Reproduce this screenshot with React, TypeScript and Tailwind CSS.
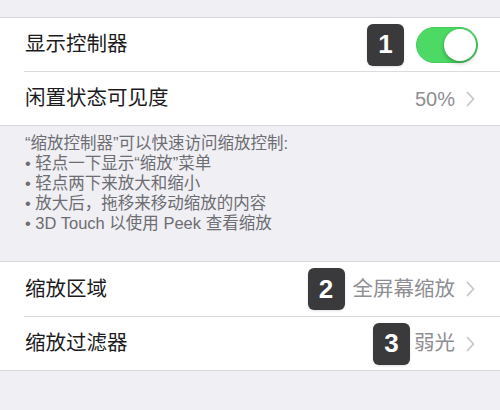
import React from "react";

const font = { fontFamily: '"Liberation Sans", "Noto Sans CJK SC", sans-serif' };

const Badge: React.FC<{ n: string; className?: string }> = ({ n, className }) => (
  <div
    className={`w-[37px] h-[42px] rounded-[6px] bg-[#3a393b] text-white text-[26px] font-bold flex items-center justify-center shadow ${className ?? ""}`}
  >
    {n}
  </div>
);

const Chevron = () => (
  <svg width="9" height="16" viewBox="0 0 9 16" className="ml-[11px]">
    <path d="M1.5 1.5 L7.5 8 L1.5 14.5" fill="none" stroke="#c7c7cc" strokeWidth="1.8" strokeLinecap="round" strokeLinejoin="round" />
  </svg>
);

const Toggle = () => (
  <div className="relative w-[62px] h-[36px] rounded-full bg-[#4cd964] border border-[#48c95e]">
    <div className="absolute right-[1px] top-[1px] w-[32px] h-[32px] rounded-full bg-white shadow-[0_2px_4px_rgba(0,0,0,0.3)]" />
  </div>
);

export default function App() {
  return (
    <div className="w-[500px] h-[410px] bg-[#efeff4] overflow-hidden pt-[17px]" style={font}>
      <div className="bg-white border-y border-[#d8d8dc]">
        <div className="h-[53px] flex items-center pl-[25px] pr-[22px]">
          <span className="text-[20.5px] text-[#1c1c1e] flex-1">显示控制器</span>
          <Badge n="1" className="mr-[12px]" />
          <Toggle />
        </div>
        <div className="ml-[24px] border-t border-[#dcdce0]" />
        <div className="h-[53px] flex items-center pl-[25px] pr-[25px]">
          <span className="text-[20.5px] text-[#1c1c1e] flex-1">闲置状态可见度</span>
          <span className="text-[20px] text-[#8e8e93]">50%</span>
          <Chevron />
        </div>
      </div>

      <div className="pl-[25px] pt-[7px] text-[16.5px] leading-[20px] text-[#6d6d72] h-[135px]">
        <div>“缩放控制器”可以快速访问缩放控制:</div>
        <div>• 轻点一下显示“缩放”菜单</div>
        <div>• 轻点两下来放大和缩小</div>
        <div>• 放大后，拖移来移动缩放的内容</div>
        <div>• 3D Touch 以使用 Peek 查看缩放</div>
      </div>

      <div className="bg-white border-y border-[#d8d8dc]">
        <div className="h-[54px] flex items-center pl-[25px] pr-[25px]">
          <span className="text-[20.5px] text-[#1c1c1e] flex-1">缩放区域</span>
          <Badge n="2" className="mr-[8px]" />
          <span className="text-[20.5px] text-[#8e8e93]">全屏幕缩放</span>
          <Chevron />
        </div>
        <div className="ml-[24px] border-t border-[#dcdce0]" />
        <div className="h-[53px] flex items-center pl-[25px] pr-[25px]">
          <span className="text-[20.5px] text-[#1c1c1e] flex-1">缩放过滤器</span>
          <Badge n="3" className="mr-[4px]" />
          <span className="text-[20.5px] text-[#8e8e93]">弱光</span>
          <Chevron />
        </div>
      </div>
    </div>
  );
}
